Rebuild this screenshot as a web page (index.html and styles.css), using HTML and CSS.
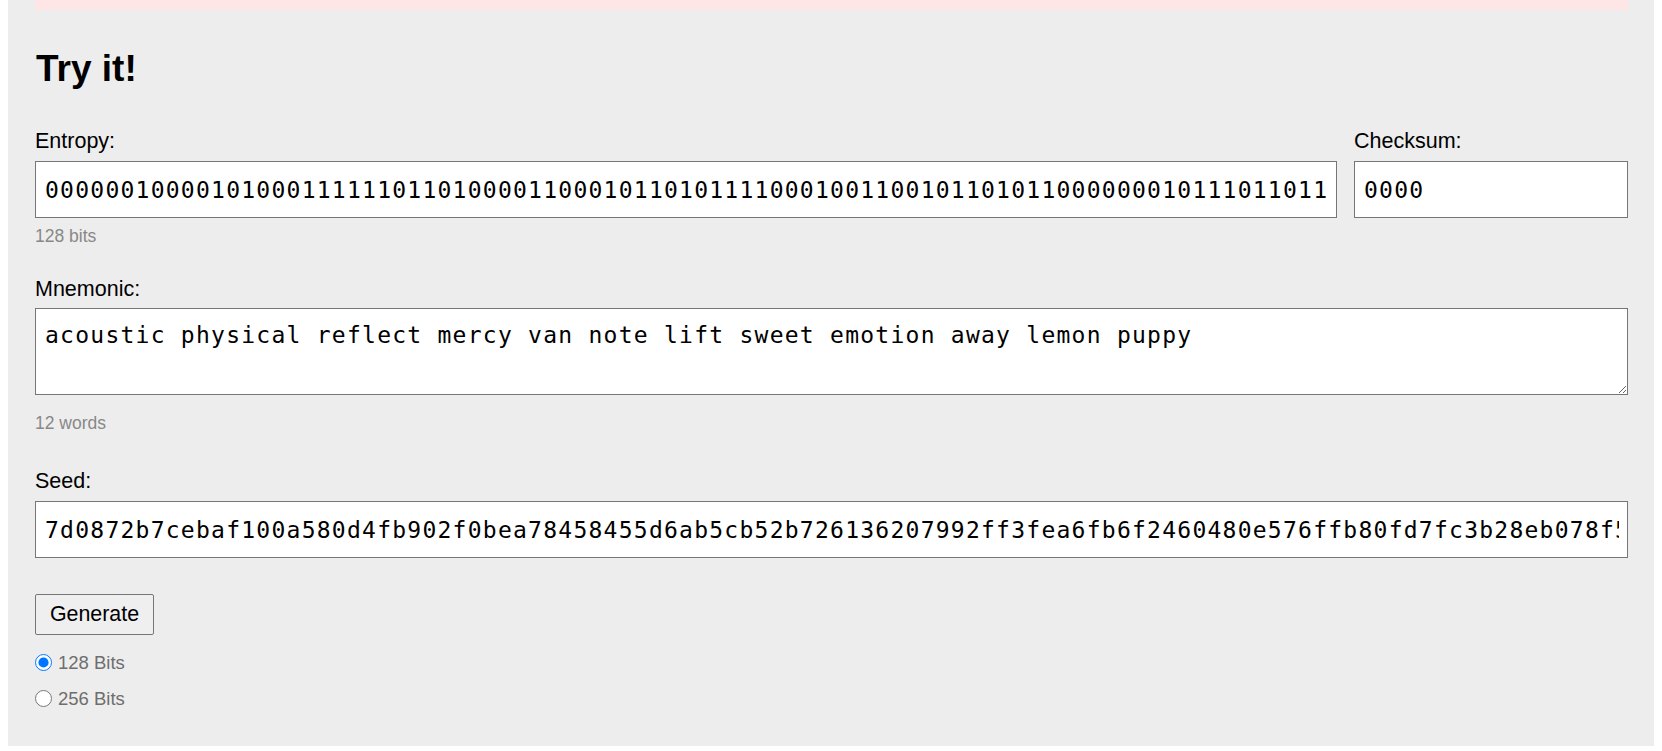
FILE: index.html
```html
<!DOCTYPE html>
<html lang="en">
<head>
<meta charset="utf-8">
<title>Try it!</title>
<link rel="stylesheet" href="styles.css">
</head>
<body>
<section class="panel">
  <div class="alert-strip"></div>
  <h1 class="title">Try it!</h1>

  <div class="entropy-row">
    <div class="field field-grow">
      <label class="field-label" for="entropy">Entropy:</label>
      <input class="mono-input" id="entropy" type="text" value="00000010000101000111111011010000110001011010111100010011001011010110000000101110110111000100100011000010000011011111111111010111">
      <div class="hint">128 bits</div>
    </div>
    <div class="field field-checksum">
      <label class="field-label" for="checksum">Checksum:</label>
      <input class="mono-input" id="checksum" type="text" value="0000">
    </div>
  </div>

  <div class="field field-mnemonic">
    <label class="field-label" for="mnemonic">Mnemonic:</label>
    <textarea class="mono-input mono-area" id="mnemonic">acoustic physical reflect mercy van note lift sweet emotion away lemon puppy</textarea>
    <div class="hint hint-words">12 words</div>
  </div>

  <div class="field field-seed">
    <label class="field-label" for="seed">Seed:</label>
    <input class="mono-input" id="seed" type="text" value="7d0872b7cebaf100a580d4fb902f0bea78458455d6ab5cb52b726136207992ff3fea6fb6f2460480e576ffb80fd7fc3b28eb078f5a9c21">
  </div>

  <button class="gen-btn" type="button">Generate</button>

  <label class="radio-row radio-first"><input class="radio" type="radio" name="bits" checked> 128 Bits</label>
  <label class="radio-row radio-second"><input class="radio" type="radio" name="bits"> 256 Bits</label>
</section>
</body>
</html>
```

FILE: styles.css
```css
html, body {
  background: #ffffff;
}
body {
  margin: 0 8px 5px 8px;
  font-family: "Liberation Sans", Arial, sans-serif;
  color: #000;
}
.panel {
  background: #ededed;
  padding: 0 26px 37px 27px;
  display: flex;
  flex-direction: column;
  align-items: stretch;
}
.alert-strip {
  height: 10px;
  background: #fee6e6;
}
.title {
  margin: 37px 0 0 0;
  padding-left: 1px;
  font-size: 37px;
  line-height: 44px;
  font-weight: bold;
  height: 44px;
}
.entropy-row {
  margin-top: 38px;
  display: flex;
  gap: 17px;
}
.field {
  display: flex;
  flex-direction: column;
}
.field-grow {
  flex: 1 1 auto;
  min-width: 0;
}
.field-checksum {
  width: 274px;
  flex: 0 0 274px;
}
.field-label {
  font-size: 21.5px;
  line-height: 25px;
  height: 25px;
  margin-bottom: 7px;
}
.mono-input {
  box-sizing: border-box;
  width: 100%;
  height: 57px;
  margin: 0;
  border: 1px solid #767676;
  border-radius: 0;
  background: #fff;
  color: #000;
  font-family: "DejaVu Sans Mono", monospace;
  font-size: 23px;
  letter-spacing: 1.25px;
  padding: 0 8px 0 9px;
  outline: none;
}
.mono-area {
  display: block;
  height: 87px;
  line-height: 27px;
  padding: 13px 8px 0 9px;
  resize: vertical;
  overflow: hidden;
}
.hint {
  margin-top: 8px;
  font-size: 17.5px;
  line-height: 20px;
  height: 20px;
  color: #888;
}
.field-mnemonic {
  margin-top: 31px;
}
.field-mnemonic .field-label {
  margin-bottom: 6px;
}
.hint-words {
  margin-top: 18px;
}
.field-seed {
  margin-top: 36px;
}
.gen-btn {
  align-self: flex-start;
  margin-top: 36px;
  height: 41px;
  width: 119px;
  padding: 0;
  box-sizing: border-box;
  border: 1px solid #767676;
  border-radius: 2px;
  background: #efefef;
  color: #000;
  font-family: "Liberation Sans", Arial, sans-serif;
  font-size: 21.4px;
}
.radio-row {
  display: flex;
  align-items: center;
  height: 21px;
  font-size: 18.5px;
  line-height: 21px;
  color: #6e6e6e;
  align-self: flex-start;
}
.radio-first {
  margin-top: 17px;
}
.radio-second {
  margin-top: 15px;
}
.radio {
  width: 17px;
  height: 17px;
  margin: 0 6px 0 0;
  accent-color: #0075ff;
}
```
